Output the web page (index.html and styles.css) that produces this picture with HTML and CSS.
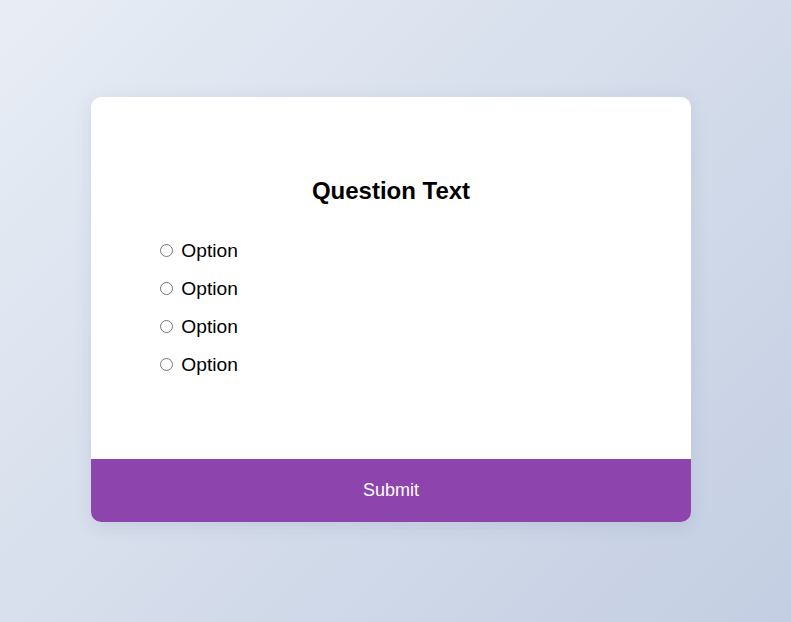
FILE: index.html
```html
<!DOCTYPE html>
<html lang="en">
<head>
<meta charset="utf-8">
<title>Question</title>
<link rel="stylesheet" href="styles.css">
</head>
<body>
  <div class="card">
    <div class="card-body">
      <h2 class="question">Question Text</h2>
      <div class="options">
        <label class="option"><input type="radio" name="q"> Option</label>
        <label class="option"><input type="radio" name="q"> Option</label>
        <label class="option"><input type="radio" name="q"> Option</label>
        <label class="option"><input type="radio" name="q"> Option</label>
      </div>
    </div>
    <button class="submit" type="button">Submit</button>
  </div>
</body>
</html>
```

FILE: styles.css
```css
html, body {
  margin: 0;
  height: 100%;
}

body {
  box-sizing: border-box;
  min-height: 100vh;
  display: flex;
  justify-content: center;
  align-items: center;
  padding: 0 9px 3px 0;
  font-family: "Liberation Sans", Arial, sans-serif;
  background: linear-gradient(135deg, #e8edf5 0%, #c3cee2 100%);
  color: #000;
}

.card {
  width: 600px;
  background: #fff;
  border-radius: 10px;
  overflow: hidden;
  box-shadow: 0 4px 18px rgba(60, 80, 120, 0.12);
  display: flex;
  flex-direction: column;
}

.card-body {
  padding: 80px 64px 83px;
}

.question {
  margin: 0 0 36px;
  font-size: 24px;
  line-height: 27px;
  font-weight: bold;
  text-align: center;
}

.options {
  display: flex;
  flex-direction: column;
  gap: 16px;
}

.option {
  display: block;
  font-size: 19.2px;
  line-height: 22px;
}

.option input {
  margin: 3px 3px 0 5px;
}

.submit {
  display: block;
  width: 100%;
  height: 63px;
  border: none;
  margin: 0;
  padding: 0;
  background: #8e44ad;
  color: #fff;
  font-family: "Liberation Sans", Arial, sans-serif;
  font-size: 18px;
  cursor: pointer;
}
```
